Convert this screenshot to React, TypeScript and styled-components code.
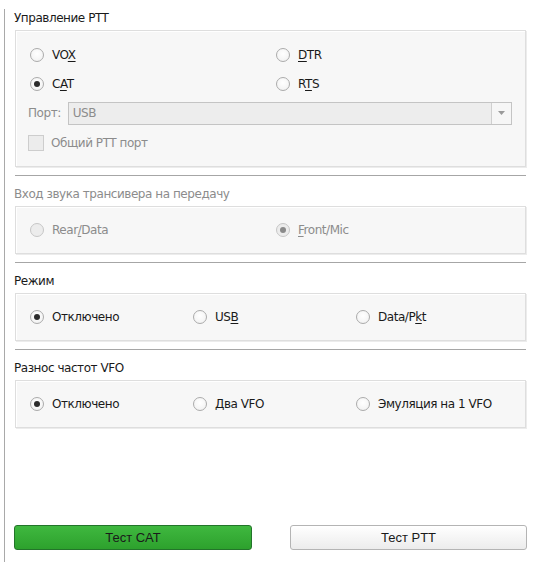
import styled, { createGlobalStyle } from "styled-components";

const GlobalStyle = createGlobalStyle`
  html, body {
    margin: 0;
    padding: 0;
    background: #ffffff;
  }
  body {
    font-family: "DejaVu Sans", Tahoma, Verdana, sans-serif;
    font-size: 12px;
    letter-spacing: -0.45px;
    color: #1a1a1a;
  }
`;

const Page = styled.div`
  display: flex;
  height: 562px;
  width: 534px;
  box-sizing: border-box;
`;

const Rule = styled.div`
  width: 1px;
  margin: 9px 0 0 4px;
  background: #a9a9a9;
`;

const Content = styled.div`
  display: flex;
  flex-direction: column;
  flex: 1;
  padding: 9px 8px 12px 9px;
`;

const Title = styled.div<{ $disabled?: boolean }>`
  height: 18px;
  line-height: 18px;
  margin-bottom: 3px;
  color: ${p => (p.$disabled ? "#8c8c8c" : "#1a1a1a")};
`;

const Panel = styled.div<{ $cols?: string }>`
  margin-left: 1px;
  display: grid;
  grid-template-columns: ${p => p.$cols || "1fr"};
  grid-auto-rows: 26px;
  align-items: center;
  padding: 10px 13px 10px 14px;
  background: #f7f7f7;
  border: 1px solid #dedede;
  box-shadow: inset 1px 1px 0 #ffffff, 1px 1px 0 #ececec;
`;

const PttPanel = styled(Panel)`
  grid-template-columns: 246px 1fr;
  grid-template-rows: 29px 29px 30px 30px;
  padding: 9px 13px 8px 14px;
`;

const Separator = styled.div`
  height: 1px;
  margin: 8px 0 9px 1px;
  background: #a6a6a6;
  box-shadow: 0 1px 0 #ffffff;
`;

const Option = styled.label<{ $disabled?: boolean }>`
  display: flex;
  align-items: center;
  gap: 8px;
  color: ${p => (p.$disabled ? "#8c8c8c" : "#1a1a1a")};
  white-space: nowrap;
`;

const RadioCircle = styled.span<{ $checked?: boolean; $disabled?: boolean }>`
  width: 14px;
  height: 14px;
  border-radius: 50%;
  box-sizing: border-box;
  border: 1px solid ${p => (p.$disabled ? "#c6c6c6" : "#ababab")};
  background: ${p =>
    p.$disabled
      ? "#ececec"
      : "radial-gradient(circle at 50% 40%, #ffffff 0%, #f4f4f4 70%, #e6e6e6 100%)"};
  display: flex;
  align-items: center;
  justify-content: center;
  flex-shrink: 0;

  &::after {
    content: "";
    display: ${p => (p.$checked ? "block" : "none")};
    width: 6px;
    height: 6px;
    border-radius: 50%;
    background: ${p => (p.$disabled ? "#8a8a8a" : "#2b2b2b")};
  }
`;

const Mn = styled.span`
  text-decoration: underline;
  text-underline-offset: 2px;
`;

const PortRow = styled.div`
  grid-column: 1 / -1;
  display: flex;
  align-items: center;
  margin-left: -2px;
  gap: 7px;
  color: #8c8c8c;
`;

const Combo = styled.div`
  flex: 1;
  height: 23px;
  box-sizing: border-box;
  display: flex;
  border: 1px solid #c4c4c4;
  background: #ededed;
  color: #8c8c8c;
`;

const ComboText = styled.div`
  flex: 1;
  padding-left: 4px;
  line-height: 21px;
`;

const ComboButton = styled.div`
  width: 19px;
  border-left: 1px solid #cfcfcf;
  background: #f6f6f6;
  display: flex;
  align-items: center;
  justify-content: center;
`;

const CheckRow = styled.div`
  grid-column: 1 / -1;
  display: flex;
  align-items: center;
  gap: 7px;
  margin-left: -2px;
  color: #8c8c8c;
`;

const CheckBox = styled.span`
  width: 16px;
  height: 16px;
  box-sizing: border-box;
  border: 1px solid #cdcdcd;
  background: #ececec;
`;

const Buttons = styled.div`
  margin-top: auto;
  display: grid;
  grid-template-columns: 238px 237px;
  justify-content: space-between;
  margin-right: -1px;
`;

const Button = styled.div<{ $primary?: boolean }>`
  height: 25px;
  box-sizing: border-box;
  border-radius: 3px;
  display: flex;
  align-items: center;
  justify-content: center;
  font-family: "Liberation Sans", Arial, sans-serif;
  font-size: 13px;
  letter-spacing: 0;
  color: #1a1a1a;
  border: 1px solid ${p => (p.$primary ? "#23742a" : "#b4b4b4")};
  background: ${p =>
    p.$primary
      ? "linear-gradient(#3fb83f, #2da12d)"
      : "linear-gradient(#ffffff, #ececec)"};
  box-shadow: ${p => (p.$primary ? "none" : "inset 0 1px 0 #ffffff")};
`;

type RadioProps = {
  checked?: boolean;
  disabled?: boolean;
  children: React.ReactNode;
};

function Radio({ checked, disabled, children }: RadioProps) {
  return (
    <Option $disabled={disabled}>
      <RadioCircle $checked={checked} $disabled={disabled} />
      <span>{children}</span>
    </Option>
  );
}

export default function App() {
  return (
    <>
      <GlobalStyle />
      <Page>
        <Rule />
        <Content>
          <Title>Управление PTT</Title>
          <PttPanel>
            <Radio>VO<Mn>X</Mn></Radio>
            <Radio><Mn>D</Mn>TR</Radio>
            <Radio checked>C<Mn>A</Mn>T</Radio>
            <Radio>R<Mn>T</Mn>S</Radio>
            <PortRow>
              <span>Порт:</span>
              <Combo>
                <ComboText>USB</ComboText>
                <ComboButton>
                  <svg width="7" height="4" viewBox="0 0 7 4">
                    <path d="M0 0h7L3.5 4z" fill="#9a9a9a" />
                  </svg>
                </ComboButton>
              </Combo>
            </PortRow>
            <CheckRow>
              <CheckBox />
              <span>Общий PTT порт</span>
            </CheckRow>
          </PttPanel>
          <Separator />

          <Title $disabled>Вход звука трансивера на передачу</Title>
          <Panel $cols="246px 1fr">
            <Radio disabled>Rear<Mn>/</Mn>Data</Radio>
            <Radio disabled checked><Mn>F</Mn>ront/Mic</Radio>
          </Panel>
          <Separator />

          <Title>Режим</Title>
          <Panel $cols="163px 163px 1fr">
            <Radio checked>Отключено</Radio>
            <Radio>US<Mn>B</Mn></Radio>
            <Radio>Data/P<Mn>k</Mn>t</Radio>
          </Panel>
          <Separator />

          <Title>Разнос частот VFO</Title>
          <Panel $cols="163px 163px 1fr">
            <Radio checked>Отключено</Radio>
            <Radio>Два VFO</Radio>
            <Radio>Эмуляция на 1 VFO</Radio>
          </Panel>

          <Buttons>
            <Button $primary>Тест CAT</Button>
            <Button>Тест PTT</Button>
          </Buttons>
        </Content>
      </Page>
    </>
  );
}
